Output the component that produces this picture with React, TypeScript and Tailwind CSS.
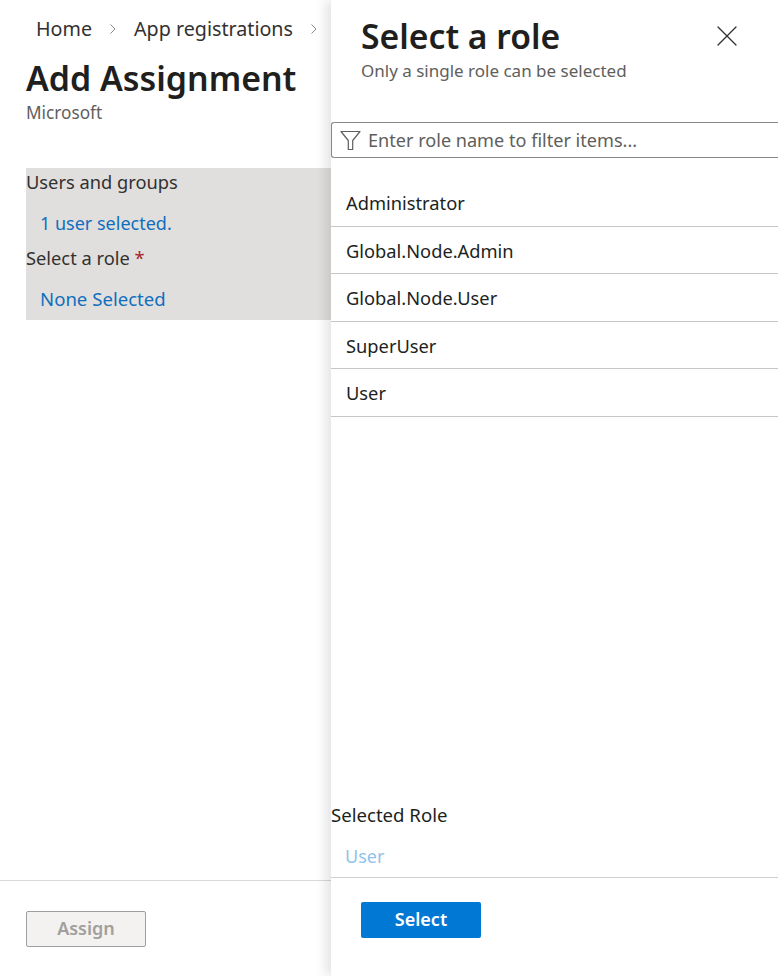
import { X } from 'lucide-react'

const roles = ['Administrator', 'Global.Node.Admin', 'Global.Node.User', 'SuperUser', 'User']

function Chevron() {
  return (
    <svg className="w-[8px] h-[12px] text-[#8a8886]" viewBox="0 0 8 12" fill="none" stroke="currentColor" strokeWidth={1}>
      <path d="M1.5 1.5 L6 6 L1.5 10.5" />
    </svg>
  )
}

function RolePanel() {
  return (
    <div className="absolute top-0 right-0 bottom-0 w-[447px] bg-white shadow-[-6px_0_10px_rgba(0,0,0,0.1)] flex flex-col">
      <div className="pl-[30px] pr-[33px] flex justify-between h-[122px]">
        <div>
          <h2 className="text-[33.7px] leading-[44px] mt-[14px] font-semibold text-[#201f1e]">Select a role</h2>
          <p className="text-[17px] leading-[24px] mt-[1px] text-[#605e5c]">Only a single role can be selected</p>
        </div>
        <X className="w-[36px] h-[36px] mt-[18px] text-[#323130]" strokeWidth={0.85} />
      </div>
      <div className="h-[36px] border border-r-0 border-[#8a8886] rounded-l-[3px] flex items-center pl-[8px] gap-[7px]">
        <svg className="w-[21px] h-[21px] text-[#605e5c]" viewBox="0 0 21 21" fill="none" stroke="currentColor" strokeWidth={1.2}>
          <path d="M1 1.5 H20 L12.7 10.5 V19.5 H8.3 V10.5 Z" strokeLinejoin="round" />
        </svg>
        <span className="text-[18.1px] pt-[1px] text-[#605e5c]">Enter role name to filter items...</span>
      </div>
      <ul className="mt-[21px]">
        {roles.map((role) => (
          <li key={role} className="h-[47.5px] pl-[15px] pt-[1px] flex items-center border-b border-[#c8c6c4] text-[18.3px] text-[#201f1e]">
            {role}
          </li>
        ))}
      </ul>
      <div className="mt-auto">
        <div className="text-[18.6px] leading-[24px] -mt-[1px] text-[#201f1e]">Selected Role</div>
        <div className="pl-[14px] pt-[17px] h-[51px] border-b border-[#d2d0ce] text-[18px] leading-[24px] text-[#8fc3ec]">User</div>
        <div className="pl-[30px] pt-[24px] h-[98px]">
          <button className="w-[120px] h-[36px] pb-[2px] bg-[#0078d4] rounded-[2px] text-white text-[18px] font-semibold">Select</button>
        </div>
      </div>
    </div>
  )
}

export default function App() {
  return (
    <div className="relative w-[778px] h-[976px] bg-white overflow-hidden font-['Noto_Sans','Open_Sans',sans-serif] flex flex-col">
      <nav className="flex items-center pl-[36px] pt-[2px] h-[56px] text-[19.7px] text-[#323130]">
        <span>Home</span>
        <span className="ml-[17px] mr-[17px]"><Chevron /></span>
        <span>App registrations</span>
        <span className="ml-[17px]"><Chevron /></span>
      </nav>
      <div className="pl-[26px]">
        <h1 className="text-[33.9px] leading-[44px] font-semibold text-[#201f1e]">Add Assignment</h1>
        <p className="text-[17.2px] leading-[24px] mt-[1px] text-[#605e5c]">Microsoft</p>
      </div>
      <section className="ml-[26px] mt-[43px] w-[305px] h-[152px] bg-[#e1dfdd] text-[18.3px] text-[#323130]">
        <div className="h-[30px] leading-[28px]">Users and groups</div>
        <div className="h-[45px] pl-[14px] leading-[50px] text-[18px] text-[#106ebe]">1 user selected.</div>
        <div className="h-[30px] leading-[30px]">Select a role <span className="text-[#a4262c]">*</span></div>
        <div className="pl-[14px] leading-[52px] text-[18.6px] text-[#106ebe]">None Selected</div>
      </section>
      <footer className="mt-auto h-[96px] border-t border-[#d9d9d9] pl-[26px] pt-[30px]">
        <button className="w-[120px] h-[36px] pb-[2px] bg-[#f3f2f1] border border-[#a19f9d] rounded-[2px] text-[18px] font-semibold text-[#a19f9d]">Assign</button>
      </footer>
      <RolePanel />
    </div>
  )
}
